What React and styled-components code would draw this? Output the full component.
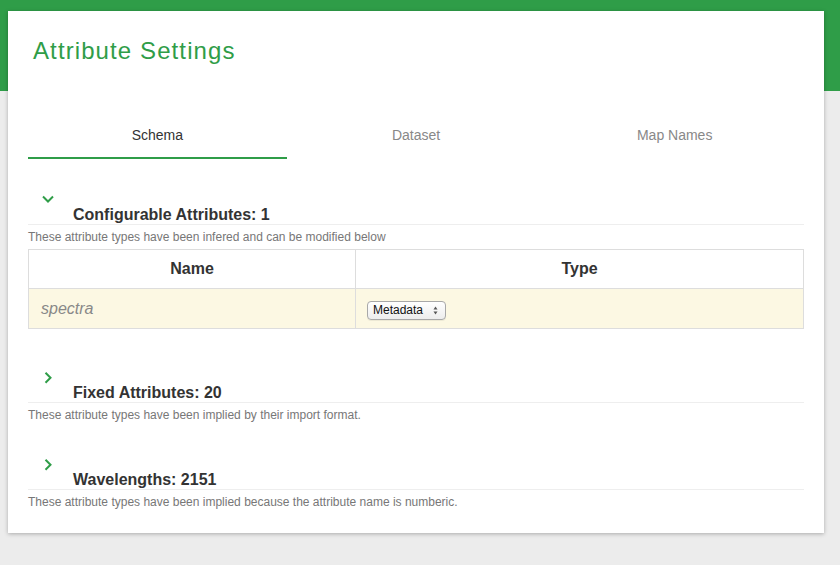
import React from 'react'
import styled, { createGlobalStyle } from 'styled-components'

const GREEN = '#2f9d48'

const GlobalStyle = createGlobalStyle`
  html, body {
    margin: 0;
    padding: 0;
    background: #ececec;
    font-family: "Liberation Sans", Arial, sans-serif;
  }
`

const Page = styled.div`
  min-height: 565px;
  padding: 11px 16px 0 8px;
  box-sizing: border-box;
  background: linear-gradient(${GREEN} 0, ${GREEN} 91px, #ececec 91px);
`

const Card = styled.div`
  width: 816px;
  box-sizing: border-box;
  background: #fff;
  padding: 0 20px 22px;
  box-shadow: 0 1px 4px rgba(0, 0, 0, 0.28);
`

const Title = styled.h1`
  margin: 0;
  padding: 27px 0 0 5px;
  font-size: 24px;
  line-height: 1.1;
  font-weight: normal;
  letter-spacing: 1.1px;
  color: ${GREEN};
`

const TabBar = styled.div`
  display: flex;
  margin-top: 48px;
`

const Tab = styled.div`
  flex: 1;
  text-align: center;
  font-size: 14px;
  line-height: 20px;
  padding: 13px 0 12px;
  color: ${(p) => (p.$active ? '#333' : '#888')};
  border-bottom: 2px solid ${(p) => (p.$active ? GREEN : 'transparent')};
`

const Section = styled.section`
  margin-top: 32px;
`

const Toggle = styled.svg`
  display: block;
  margin-left: 13px;
  overflow: visible;
`

const Heading = styled.h4`
  margin: 0;
  padding-left: 45px;
  font-size: 16px;
  line-height: 19px;
  font-weight: bold;
  color: #333;
  border-bottom: 1px solid #eee;
`

const Desc = styled.p`
  margin: 4px 0 0;
  font-size: 12px;
  line-height: 17px;
  color: #777;
`

const Table = styled.table`
  width: 100%;
  margin: 3px 0 40px;
  border-collapse: collapse;
  border: 1px solid #ddd;

  th,
  td {
    border: 1px solid #ddd;
    padding: 8px 12px;
  }

  th {
    font-size: 16px;
    line-height: 22px;
    font-weight: bold;
    color: #333;
    text-align: center;
  }
`

const Row = styled.tr`
  background: #fcf8e3;

  td {
    line-height: 23px;
    vertical-align: middle;
  }
`

const NameCell = styled.td`
  width: 302px;
  font-size: 16px;
  font-style: italic;
  color: #888;
`

const SelectWrap = styled.span`
  position: relative;
  display: inline-block;
  vertical-align: middle;
  margin-left: -1px;
`

const Select = styled.select`
  appearance: none;
  -webkit-appearance: none;
  display: block;
  width: 79px;
  height: 19px;
  box-sizing: border-box;
  padding: 0 18px 0 5px;
  font-family: "Liberation Sans", Arial, sans-serif;
  font-size: 12px;
  color: #111;
  border: 1px solid #a8a8a8;
  border-radius: 4px;
  background: linear-gradient(#ffffff, #ededed);
  box-shadow: 0 1px 0 rgba(0, 0, 0, 0.06);
`

const Arrows = styled.svg`
  position: absolute;
  right: 8px;
  top: 5px;
  pointer-events: none;
`

const ChevronDown = () => (
  <Toggle width="14" height="14" viewBox="0 0 14 14">
    <polyline points="2,5.5 7,10.5 12,5.5" fill="none" stroke={GREEN} strokeWidth="2" />
  </Toggle>
)

const ChevronRight = () => (
  <Toggle width="14" height="14" viewBox="0 0 14 14">
    <polyline points="4.5,3.7 9.5,8.7 4.5,13.7" fill="none" stroke={GREEN} strokeWidth="2" />
  </Toggle>
)

const App = () => (
  <>
    <GlobalStyle />
    <Page>
      <Card>
        <Title>Attribute Settings</Title>
        <TabBar>
          <Tab $active>Schema</Tab>
          <Tab>Dataset</Tab>
          <Tab>Map Names</Tab>
        </TabBar>

        <Section>
          <ChevronDown />
          <Heading>Configurable Attributes: 1</Heading>
          <Desc>These attribute types have been infered and can be modified below</Desc>
          <Table>
            <thead>
              <tr>
                <th>Name</th>
                <th>Type</th>
              </tr>
            </thead>
            <tbody>
              <Row>
                <NameCell>spectra</NameCell>
                <td>
                  <SelectWrap>
                    <Select defaultValue="metadata">
                      <option value="metadata">Metadata</option>
                    </Select>
                    <Arrows width="5" height="9" viewBox="0 0 5 9">
                      <polygon points="0.5,3.5 2.5,0.5 4.5,3.5" fill="#555" />
                      <polygon points="0.5,5.5 2.5,8.5 4.5,5.5" fill="#555" />
                    </Arrows>
                  </SelectWrap>
                </td>
              </Row>
            </tbody>
          </Table>
        </Section>

        <Section>
          <ChevronRight />
          <Heading>Fixed Attributes: 20</Heading>
          <Desc>These attribute types have been implied by their import format.</Desc>
        </Section>

        <Section>
          <ChevronRight />
          <Heading>Wavelengths: 2151</Heading>
          <Desc>These attribute types have been implied because the attribute name is numberic.</Desc>
        </Section>
      </Card>
    </Page>
  </>
)

export default App
